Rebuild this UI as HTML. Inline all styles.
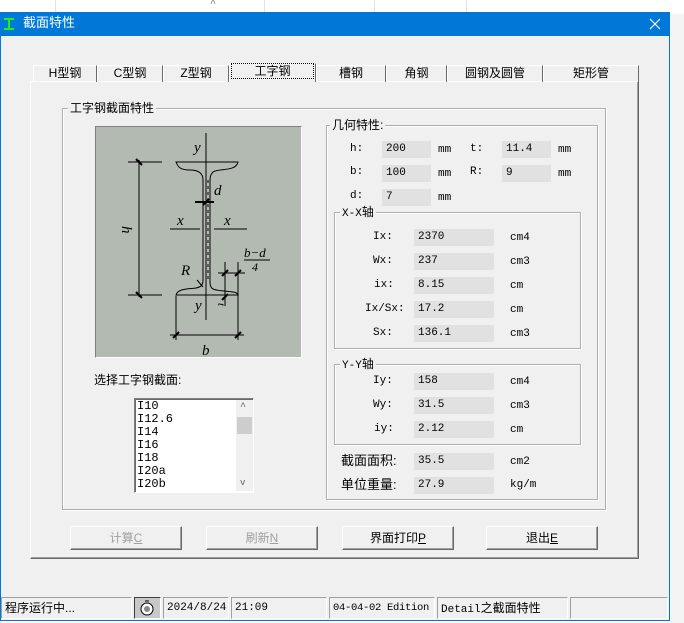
<!DOCTYPE html>
<html><head><meta charset="utf-8"><style>
*{margin:0;padding:0;box-sizing:border-box}
body{width:684px;height:623px;background:#fff;position:relative;overflow:hidden;font-family:"Liberation Mono","Noto Sans CJK SC",monospace;font-size:11px;color:#000}
.a{position:absolute}
.t{position:absolute;white-space:nowrap;line-height:14px}
.cj{font-family:"Liberation Sans","Noto Sans CJK SC",sans-serif;font-size:12px}
.in{position:absolute;background:#e1e1e1;height:17px;padding-left:4px;line-height:17px}
.grp{position:absolute;border:1px solid #adadad;box-shadow:inset 1px 1px 0 #fff,1px 1px 0 #fff}
.lg{position:absolute;background:#f0f0f0;padding:0 2px;line-height:14px;white-space:nowrap}
.tab{position:absolute;top:65px;height:17px;border:1px solid #fff;border-right:1px solid #696969;border-bottom:none;text-align:center;line-height:15px;font-size:12px}
.btn{position:absolute;top:526px;width:112px;height:24px;background:#f0f0f0;border:1px solid;border-color:#fff #696969 #696969 #fff;box-shadow:inset -1px -1px 0 #a0a0a0;text-align:center;line-height:22px}
.sb{position:absolute;top:597px;height:22px;border:1px solid;border-color:#a0a0a0 #fff #fff #a0a0a0;line-height:20px;padding-left:3px;white-space:nowrap;overflow:hidden}
</style></head><body>
<div class="a" style="left:55px;top:0;width:1px;height:12px;background:#e3e3e3"></div>
<div class="a" style="left:264px;top:0;width:1px;height:12px;background:#e3e3e3"></div>
<div class="a" style="left:374px;top:0;width:1px;height:12px;background:#e3e3e3"></div>
<div class="a" style="left:466px;top:0;width:1px;height:12px;background:#e3e3e3"></div>
<div class="t" style="left:210px;top:-2px;color:#777;font-size:10px">^</div>
<div class="a" style="left:670px;top:14px;width:14px;height:609px;background:#f4f4f4"></div>
<div class="a" style="left:0;top:12px;width:670px;height:609px;background:#f0f0f0;border:1px solid #0078d7;border-top:none"></div>
<div class="a" style="left:0;top:12px;width:670px;height:24px;background:#0078d7"></div>
<svg class="a" style="left:3px;top:17px" width="12" height="14"><path d="M1 1H11V3H7V11H11V13H1V11H5V3H1Z" fill="#1cf01c"/></svg>
<div class="t cj" style="left:23px;top:16px;color:#fff;font-size:13px">截面特性</div>
<svg class="a" style="left:649px;top:18px" width="12" height="12"><path d="M1 1L11 11M11 1L1 11" stroke="#fff" stroke-width="1.2"/></svg>
<div class="a" style="left:30px;top:81px;width:609px;height:478px;border:1px solid;border-color:#fff #696969 #696969 #fff;box-shadow:inset -1px -1px 0 #a0a0a0"></div>
<div class="tab cj" style="left:33px;width:64px">H型钢</div>
<div class="tab cj" style="left:97px;width:66px">C型钢</div>
<div class="tab cj" style="left:163px;width:66px">Z型钢</div>
<div class="tab cj" style="left:229px;width:87px;top:63px;height:19px;background:#f0f0f0"><span style="outline:1px dotted #000;padding:0 22px">工字钢</span></div>
<div class="tab cj" style="left:316px;width:70px">槽钢</div>
<div class="tab cj" style="left:386px;width:61px">角钢</div>
<div class="tab cj" style="left:447px;width:96px">圆钢及圆管</div>
<div class="tab cj" style="left:543px;width:96px">矩形管</div>
<div class="grp" style="left:62px;top:108px;width:544px;height:402px"></div>
<div class="lg cj" style="left:68px;top:101px">工字钢截面特性</div>
<div class="a" style="left:95px;top:126px;width:207px;height:232px;background:#b3bab2;border:1px solid;border-color:#808080 #fff #fff #808080">
<svg width="205" height="230" viewBox="96 127 205 230" style="position:absolute;left:0;top:0" fill="none" stroke="#000" stroke-width="1">
<line x1="206" y1="133" x2="206" y2="320"/>
<path d="M176 162 H238 C236 172 218 168 213 172 C210 175 210 178 210 182 V282 C210 290 214 290 224 291 C234 292 237 292 238 295 H176 C178 288 190 289 196 288 C201 287 203 285 203 280 V180 C203 173 198 170 190 170 C180 170 178 167 176 162 Z"/>
<line x1="208" y1="180" x2="208" y2="282" stroke-dasharray="3,3"/>
<line x1="139" y1="160" x2="139" y2="297"/>
<line x1="128" y1="162" x2="162" y2="162"/><line x1="128" y1="295" x2="162" y2="295"/>
<line x1="170" y1="229" x2="200" y2="229"/><line x1="214" y1="229" x2="247" y2="229"/>
<line x1="195" y1="202" x2="214" y2="202" stroke-width="2"/>
<line x1="176" y1="296" x2="176" y2="340"/><line x1="238" y1="262" x2="238" y2="340"/>
<line x1="170" y1="335" x2="244" y2="335"/>
<line x1="225" y1="262" x2="225" y2="306"/>
<line x1="218" y1="273" x2="245" y2="273"/>
<line x1="244" y1="260" x2="270" y2="260"/>
<line x1="197" y1="280" x2="203" y2="287"/>
<g stroke-width="2"><line x1="136" y1="159" x2="142" y2="165"/><line x1="136" y1="292" x2="142" y2="298"/><line x1="173" y1="338" x2="179" y2="332"/><line x1="235" y1="338" x2="241" y2="332"/><line x1="222" y1="276" x2="228" y2="270"/><line x1="235" y1="276" x2="241" y2="270"/><line x1="222" y1="300" x2="228" y2="294"/><line x1="203" y1="205" x2="209" y2="199"/></g>
<g fill="#000" stroke="none" font-family="Liberation Serif,serif" font-style="italic" font-size="15">
<text x="194" y="152">y</text><text x="195" y="310">y</text>
<text x="214" y="195">d</text><text x="177" y="225">x</text><text x="224" y="225">x</text>
<text x="181" y="275">R</text><text x="202" y="355">b</text>
<text x="244" y="257" font-size="13">b−d</text><text x="252" y="271" font-size="12">4</text>
<text x="0" y="0" font-size="11" transform="translate(218,303) rotate(90)">t</text>
<text x="0" y="0" transform="translate(122,226) rotate(90)">h</text>
</g></svg></div>
<div class="t cj" style="left:94px;top:373px">选择工字钢截面:</div>
<div class="a" style="left:134px;top:398px;width:120px;height:95px;background:#fff;border:1px solid;border-color:#808080 #fff #fff #808080;box-shadow:inset 1px 1px 0 #696969"></div>
<div class="a" style="left:236px;top:400px;width:17px;height:91px;background:#f0f0f0"></div>
<div class="a" style="left:237px;top:417px;width:15px;height:17px;background:#cdcdcd"></div>
<div class="t" style="left:240px;top:401px;font-size:10px;color:#606060">^</div>
<div class="t" style="left:240px;top:476px;font-size:9px;color:#606060">v</div>
<div class="t" style="left:137px;top:400px;line-height:13px;font-size:12px">I10<br>I12.6<br>I14<br>I16<br>I18<br>I20a<br>I20b</div>
<div class="grp" style="left:326px;top:125px;width:272px;height:375px"></div>
<div class="lg cj" style="left:330px;top:118px">几何特性:</div>
<div class="t" style="left:350px;top:142px">h:</div><div class="in" style="left:382px;top:141px;width:49px">200</div><div class="t" style="left:438px;top:143px">mm</div>
<div class="t" style="left:470px;top:142px">t:</div><div class="in" style="left:502px;top:141px;width:49px">11.4</div><div class="t" style="left:558px;top:143px">mm</div>
<div class="t" style="left:350px;top:165px">b:</div><div class="in" style="left:382px;top:165px;width:49px">100</div><div class="t" style="left:438px;top:167px">mm</div>
<div class="t" style="left:470px;top:165px">R:</div><div class="in" style="left:502px;top:165px;width:49px">9</div><div class="t" style="left:558px;top:167px">mm</div>
<div class="t" style="left:350px;top:189px">d:</div><div class="in" style="left:382px;top:189px;width:49px">7</div><div class="t" style="left:438px;top:191px">mm</div>
<div class="grp" style="left:334px;top:212px;width:247px;height:137px"></div>
<div class="lg" style="left:340px;top:205px">X-X<span class="cj">轴</span></div>
<div class="grp" style="left:334px;top:364px;width:247px;height:81px"></div>
<div class="lg" style="left:340px;top:357px">Y-Y<span class="cj">轴</span></div>
<div class="t" style="left:373px;top:230px">Ix:</div><div class="in" style="left:414px;top:229px;width:80px">2370</div><div class="t" style="left:510px;top:231px">cm4</div>
<div class="t" style="left:373px;top:254px">Wx:</div><div class="in" style="left:414px;top:253px;width:80px">237</div><div class="t" style="left:510px;top:255px">cm3</div>
<div class="t" style="left:374px;top:278px">ix:</div><div class="in" style="left:414px;top:277px;width:80px">8.15</div><div class="t" style="left:510px;top:279px">cm</div>
<div class="t" style="left:365px;top:302px">Ix/Sx:</div><div class="in" style="left:414px;top:301px;width:80px">17.2</div><div class="t" style="left:510px;top:303px">cm</div>
<div class="t" style="left:373px;top:326px">Sx:</div><div class="in" style="left:414px;top:325px;width:80px">136.1</div><div class="t" style="left:510px;top:327px">cm3</div>
<div class="t" style="left:373px;top:374px">Iy:</div><div class="in" style="left:414px;top:373px;width:80px">158</div><div class="t" style="left:510px;top:375px">cm4</div>
<div class="t" style="left:373px;top:398px">Wy:</div><div class="in" style="left:414px;top:397px;width:80px">31.5</div><div class="t" style="left:510px;top:399px">cm3</div>
<div class="t" style="left:374px;top:422px">iy:</div><div class="in" style="left:414px;top:421px;width:80px">2.12</div><div class="t" style="left:510px;top:423px">cm</div>
<div class="t cj" style="left:341px;top:454px;font-size:13px">截面面积:</div><div class="in" style="left:414px;top:453px;width:80px">35.5</div><div class="t" style="left:510px;top:455px">cm2</div>
<div class="t cj" style="left:341px;top:478px;font-size:13px">单位重量:</div><div class="in" style="left:414px;top:477px;width:80px">27.9</div><div class="t" style="left:510px;top:478px">kg/m</div>
<div class="btn cj" style="left:70px;color:#a0a0a0">计算<u>C</u></div>
<div class="btn cj" style="left:206px;color:#a0a0a0">刷新<u>N</u></div>
<div class="btn cj" style="left:342px">界面打印<u>P</u></div>
<div class="btn cj" style="left:486px">退出<u>E</u></div>
<div class="sb cj" style="left:1px;width:131px">程序运行中...</div>
<div class="sb" style="left:134px;width:27px;background:#c8c8c8;border-color:#404040 #fff #fff #404040;padding:0"><svg width="25" height="20"><circle cx="12" cy="11" r="6" fill="#fff" stroke="#000"/><circle cx="12" cy="11" r="3" fill="#888"/><path d="M10 3H14" stroke="#000"/></svg></div>
<div class="sb" style="left:163px;width:66px">2024/8/24</div>
<div class="sb" style="left:231px;width:96px">21:09</div>
<div class="sb" style="left:329px;width:106px;font-size:10.5px;letter-spacing:-0.3px">04-04-02 Edition</div>
<div class="sb" style="left:437px;width:131px">Detail<span class="cj">之截面特性</span></div>
<div class="sb" style="left:570px;width:98px"></div>
</body></html>
